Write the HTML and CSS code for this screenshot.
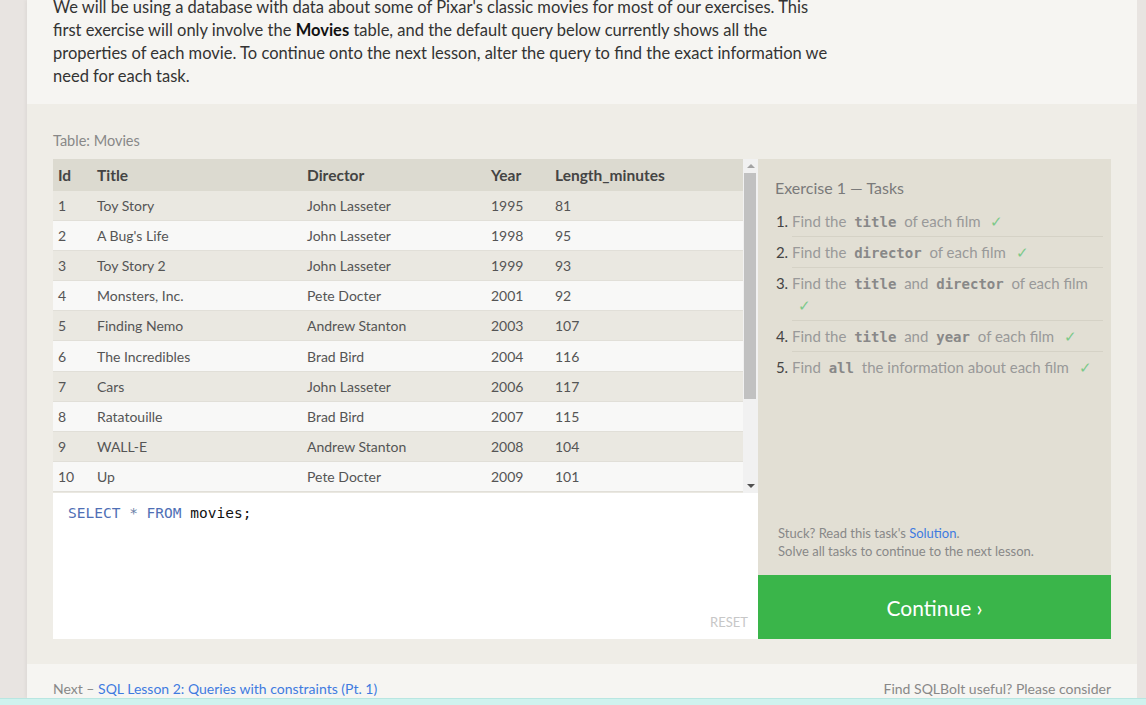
FILE: index.html
```html
<!DOCTYPE html>
<html>
<head>
<meta charset="utf-8">
<link rel="stylesheet" href="styles.css">
</head>
<body>
<div class="page">
  <section class="intro">
    <p>We will be using a database with data about some of Pixar's classic movies for most of our exercises. This first exercise will only involve the <strong>Movies</strong> table, and the default query below currently shows all the properties of each movie. To continue onto the next lesson, alter the query to find the exact information we need for each task.</p>
  </section>
  <section class="exercise">
    <div class="table-label">Table: Movies</div>
    <div class="workspace">
      <div class="left">
        <div class="results">
          <div class="table-wrap">
            <table class="movies">
              <thead>
                <tr><th class="c-id">Id</th><th class="c-title">Title</th><th class="c-dir">Director</th><th class="c-year">Year</th><th>Length_minutes</th></tr>
              </thead>
              <tbody>
                <tr><td>1</td><td>Toy Story</td><td>John Lasseter</td><td>1995</td><td>81</td></tr>
                <tr><td>2</td><td>A Bug's Life</td><td>John Lasseter</td><td>1998</td><td>95</td></tr>
                <tr><td>3</td><td>Toy Story 2</td><td>John Lasseter</td><td>1999</td><td>93</td></tr>
                <tr><td>4</td><td>Monsters, Inc.</td><td>Pete Docter</td><td>2001</td><td>92</td></tr>
                <tr><td>5</td><td>Finding Nemo</td><td>Andrew Stanton</td><td>2003</td><td>107</td></tr>
                <tr><td>6</td><td>The Incredibles</td><td>Brad Bird</td><td>2004</td><td>116</td></tr>
                <tr><td>7</td><td>Cars</td><td>John Lasseter</td><td>2006</td><td>117</td></tr>
                <tr><td>8</td><td>Ratatouille</td><td>Brad Bird</td><td>2007</td><td>115</td></tr>
                <tr><td>9</td><td>WALL-E</td><td>Andrew Stanton</td><td>2008</td><td>104</td></tr>
                <tr><td>10</td><td>Up</td><td>Pete Docter</td><td>2009</td><td>101</td></tr>
                <tr><td>11</td><td>Toy Story 3</td><td>Lee Unkrich</td><td>2010</td><td>103</td></tr>
                <tr><td>12</td><td>Cars 2</td><td>John Lasseter</td><td>2011</td><td>120</td></tr>
                <tr><td>13</td><td>Brave</td><td>Brenda Chapman</td><td>2012</td><td>102</td></tr>
                <tr><td>14</td><td>Monsters University</td><td>Dan Scanlon</td><td>2013</td><td>110</td></tr>
              </tbody>
            </table>
          </div>
          <div class="scrollbar">
            <div class="sb-btn"><span class="arrow-up"></span></div>
            <div class="sb-track"><div class="sb-thumb"></div></div>
            <div class="sb-btn"><span class="arrow-down"></span></div>
          </div>
        </div>
        <div class="editor">
          <div class="code"><span class="kw">SELECT</span> <span class="op">*</span> <span class="kw">FROM</span> <span class="id">movies;</span></div>
          <div class="reset">RESET</div>
        </div>
      </div>
      <div class="right">
        <div class="tasks">
          <h3>Exercise 1 — Tasks</h3>
          <ol>
            <li>Find the <code>title</code> of each film <span class="check">✓</span></li>
            <li>Find the <code>director</code> of each film <span class="check">✓</span></li>
            <li>Find the <code>title</code> and <code>director</code> of each film <span class="check">✓</span></li>
            <li>Find the <code>title</code> and <code>year</code> of each film <span class="check">✓</span></li>
            <li>Find <code>all</code> the information about each film <span class="check">✓</span></li>
          </ol>
        </div>
        <div class="help">
          <div>Stuck? Read this task's <a href="#">Solution</a>.</div>
          <div>Solve all tasks to continue to the next lesson.</div>
        </div>
        <a class="continue" href="#">Continue ›</a>
      </div>
    </div>
  </section>
  <footer class="footer">
    <div class="next">Next – <a href="#">SQL Lesson 2: Queries with constraints (Pt. 1)</a></div>
    <div class="support">Find SQLBolt useful? Please consider</div>
  </footer>
</div>
<div class="bottom-bar"></div>
</body>
</html>
```

FILE: styles.css
```css
html, body {
  margin: 0;
  padding: 0;
  height: 705px;
  overflow: hidden;
}
body {
  background: #e8e4e1;
  font-family: Lato, "Open Sans", sans-serif;
  color: #333;
  display: flex;
  flex-direction: column;
}
a { text-decoration: none; color: #3f7be0; }

.page {
  margin-left: 27px;
  width: 1110px;
  height: 699px;
  background: #f6f5f2;
  box-shadow: -2px 0 3px rgba(0,0,0,0.04);
  display: flex;
  flex-direction: column;
  overflow: hidden;
}

.intro {
  height: 104px;
  padding: 0 26px;
  box-sizing: border-box;
}
.intro p {
  margin: -4.5px 0 0;
  width: 778px;
  font-size: 16.5px;
  line-height: 23.2px;
  color: #333;
}
.intro strong { color: #111; }

.exercise {
  background: #efede7;
  padding: 27px 26px 25px;
  height: 560px;
  box-sizing: border-box;
}
.table-label {
  font-size: 14.5px;
  color: #888;
  height: 28px;
  line-height: 20px;
}

.workspace {
  display: flex;
  height: 480px;
}
.left {
  width: 705px;
  display: flex;
  flex-direction: column;
}
.results {
  display: flex;
  height: 334px;
  background: #e6e4dc;
}
.table-wrap {
  flex: 1;
  overflow: hidden;
}
.movies {
  width: 100%;
  border-collapse: collapse;
  font-size: 14px;
  color: #555;
}
.movies th, .movies td {
  text-align: left;
  padding: 0 0 0 5px;
}
.movies th {
  background: #dcdad0;
  color: #444;
  font-weight: 700;
  font-size: 15.5px;
  height: 32px;
}
.movies td {
  height: 29.1px;
  border-bottom: 1px solid #e1dfd8;
}
.movies tbody tr:nth-child(odd) td { background: #eae8e1; }
.movies tbody tr:nth-child(even) td { background: #f8f8f7; }
.c-id { width: 34px; }
.c-title { width: 205px; }
.c-dir { width: 179px; }
.c-year { width: 59px; }

.scrollbar {
  width: 15px;
  background: #f1f1f1;
  display: flex;
  flex-direction: column;
}
.sb-btn {
  height: 14px;
  display: flex;
  align-items: center;
  justify-content: center;
}
.arrow-up {
  width: 0; height: 0;
  border-left: 4px solid transparent;
  border-right: 4px solid transparent;
  border-bottom: 4px solid #a3a3a3;
}
.arrow-down {
  width: 0; height: 0;
  border-left: 4px solid transparent;
  border-right: 4px solid transparent;
  border-top: 4px solid #505050;
}
.sb-track {
  flex: 1;
  padding: 0 2px 0 1px;
}
.sb-thumb {
  height: 226px;
  background: #c1c1c1;
}

.editor {
  flex: 1;
  background: #fff;
  display: flex;
  flex-direction: column;
  justify-content: space-between;
  padding: 10px 10px 9px 15px;
}
.code {
  font-family: "DejaVu Sans Mono", "Liberation Mono", monospace;
  font-size: 14.5px;
  line-height: 20px;
}
.code .kw { color: #4f6fb5; }
.code .op { color: #6b7fa8; }
.code .id { color: #111; }
.reset {
  align-self: flex-end;
  font-size: 13px;
  color: #c7c7c7;
}

.right {
  flex: 1;
  display: flex;
  flex-direction: column;
  background: #e2dfd4;
}
.tasks {
  flex: 1;
  padding: 19px 8px 0 17px;
}
.tasks h3 {
  margin: 0 0 9px;
  font-weight: 400;
  font-size: 16px;
  color: #7a7a7a;
}
.tasks ol {
  margin: 0;
  padding: 0 0 0 17px;
  color: #444;
  font-size: 15px;
}
.tasks li {
  color: #999;
  line-height: 22px;
  padding: 4px 0 4px;
  border-bottom: 1px solid #d5d2c6;
}
.tasks li:last-child { border-bottom: none; }
.tasks li::marker { color: #444; }
.tasks code {
  font-family: "DejaVu Sans Mono", "Liberation Mono", monospace;
  font-weight: 700;
  font-size: 14px;
  line-height: 1;
  color: #888;
  padding: 0 4px;
}
.check {
  color: #7cc98a;
  margin-left: 6px;
}
.help {
  padding: 0 20px 15px;
  font-size: 13px;
  line-height: 18px;
  color: #888;
}
.continue {
  height: 64px;
  background: #3ab54a;
  color: #fff;
  font-size: 21px;
  display: flex;
  align-items: center;
  justify-content: center;
}

.footer {
  flex: 1;
  display: flex;
  justify-content: space-between;
  align-items: flex-end;
  padding: 0 26px 1px;
  font-size: 14px;
  color: #888;
}
.bottom-bar {
  height: 6px;
  background: #cff2ee;
  border-top: 1px solid #b8e6e1;
}
```
